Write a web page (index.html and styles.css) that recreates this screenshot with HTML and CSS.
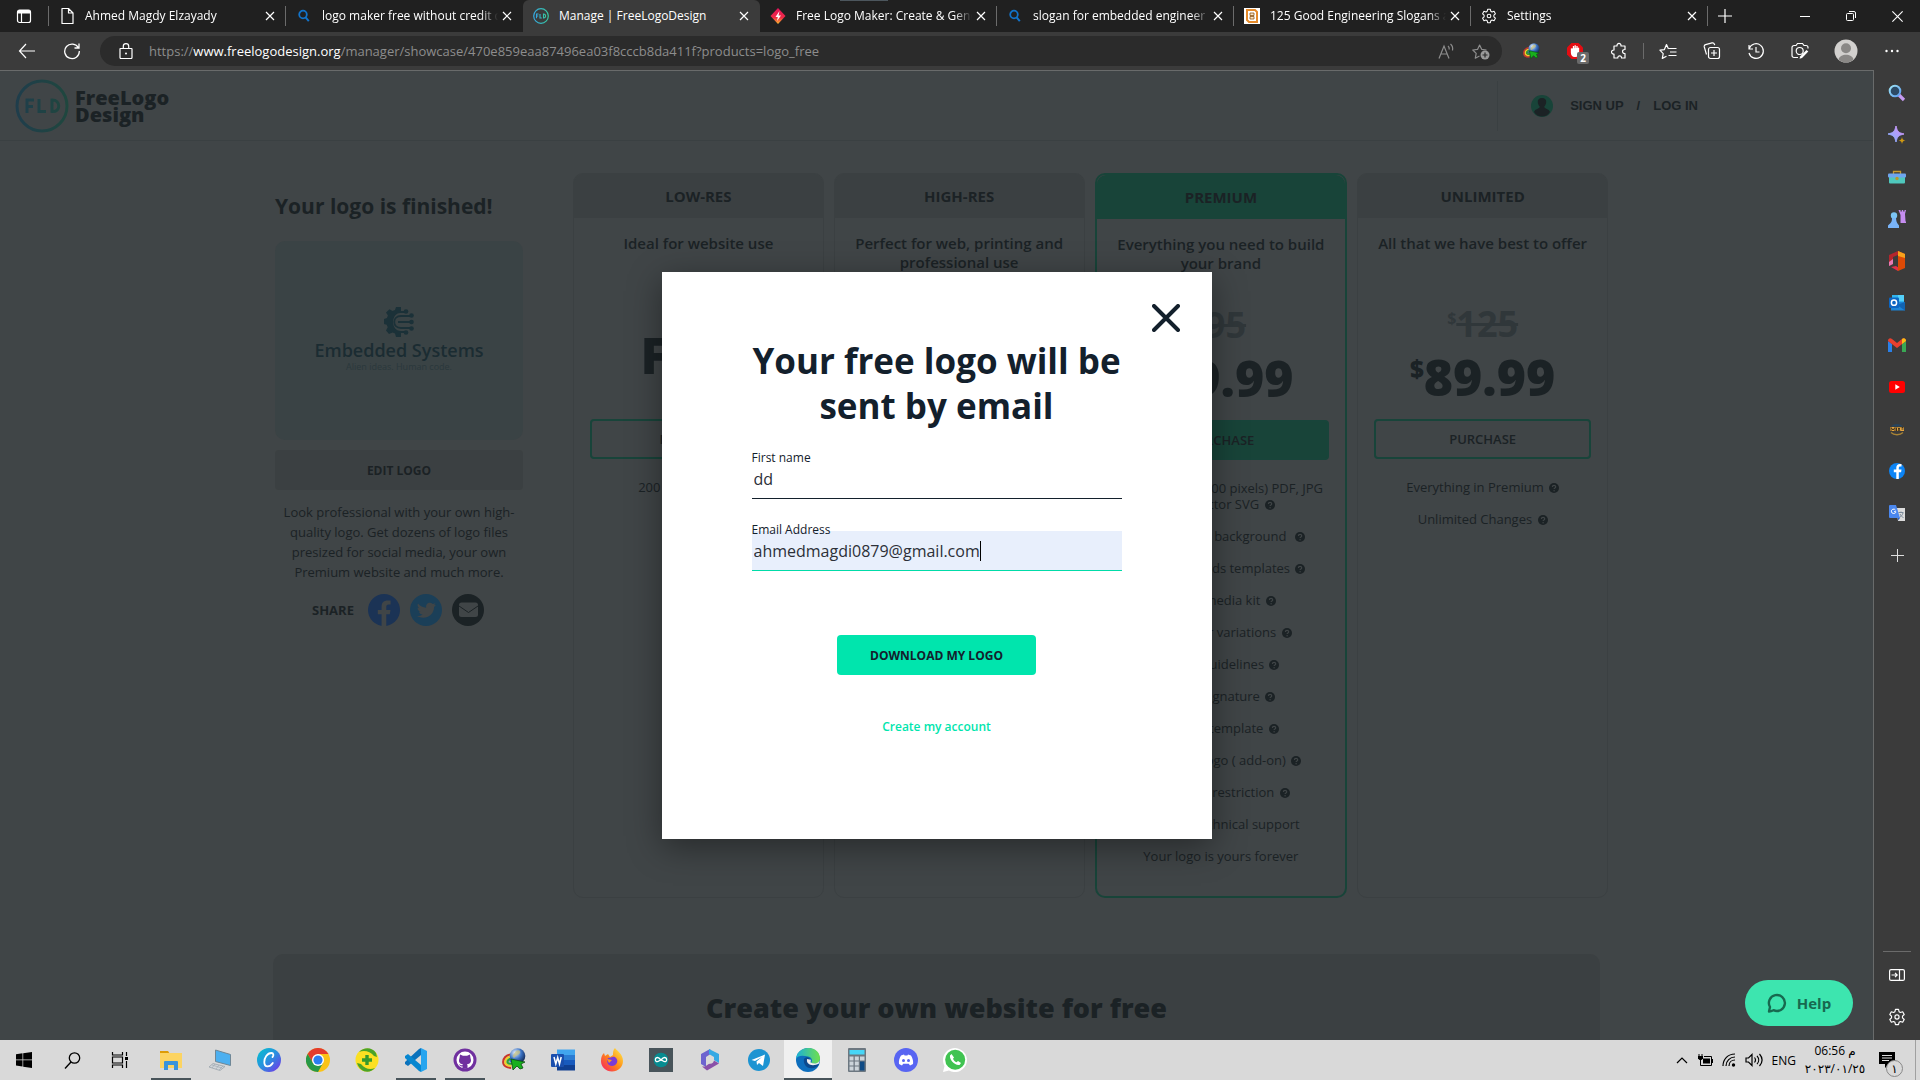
FILE: index.html
```html
<!DOCTYPE html>
<html lang="en">
<head>
<meta charset="utf-8">
<meta name="viewport" content="width=device-width, initial-scale=1">
<title>Manage | FreeLogoDesign</title>
<link rel="stylesheet" href="styles.css">
</head>
<body>
<svg class="defs" aria-hidden="true">
  <defs>
    <linearGradient id="g-fld" x1="0" x2="1" y1="0" y2="0"><stop offset="0" stop-color="#35a8e0"/><stop offset="1" stop-color="#36c9a0"/></linearGradient>
    <linearGradient id="g-flddim" gradientUnits="userSpaceOnUse" x1="0" x2="54" y1="0" y2="0"><stop offset="0" stop-color="#1f3d4c"/><stop offset="1" stop-color="#1f473e"/></linearGradient>
    <linearGradient id="g-spark" x1="0" x2="1" y1="1" y2="0"><stop offset="0" stop-color="#7db4ff"/><stop offset="1" stop-color="#d98cf5"/></linearGradient>
    <linearGradient id="g-lens" x1="0" x2="1" y1="0" y2="1"><stop offset="0" stop-color="#9fe5f5"/><stop offset="1" stop-color="#5b9bf0"/></linearGradient>
    <linearGradient id="g-canva" x1="0" x2="1" y1="0" y2="1"><stop offset="0" stop-color="#00c4cc"/><stop offset=".5" stop-color="#2a8fe0"/><stop offset="1" stop-color="#7d2ae8"/></linearGradient>
    <linearGradient id="g-fox" x1="1" x2="0" y1="0" y2="1"><stop offset="0" stop-color="#fff44f"/><stop offset=".5" stop-color="#ff8a16"/><stop offset="1" stop-color="#f5156c"/></linearGradient>
    <linearGradient id="g-edge" x1="0" x2="1" y1="0" y2="0"><stop offset="0" stop-color="#1bb0d8"/><stop offset="1" stop-color="#6fe04c"/></linearGradient>
    <linearGradient id="g-rose" x1="0" x2="0" y1="0" y2="1"><stop offset="0" stop-color="#e3125c"/><stop offset=".6" stop-color="#ee2b46"/><stop offset="1" stop-color="#ffc02e"/></linearGradient>
    <radialGradient id="g-globe" cx=".35" cy=".3" r=".8"><stop offset="0" stop-color="#e8f2ff"/><stop offset=".5" stop-color="#3a72c4"/><stop offset="1" stop-color="#0e1c40"/></radialGradient>
    <symbol id="i-close" viewBox="0 0 10 10"><path d="M1 1l8 8M9 1L1 9" stroke="currentColor" stroke-width="1.200"/></symbol>
    <symbol id="i-search" viewBox="0 0 16 16"><circle cx="7" cy="6.500" r="3.800" fill="none" stroke="#1273c9" stroke-width="1.800"/><path d="M9.600 9.400l3.200 3.800" stroke="#1273c9" stroke-width="2"/></symbol>
    <symbol id="i-gear" viewBox="0 0 20 20"><g fill="none" stroke="currentColor" stroke-width="1.300" stroke-linejoin="round"><path d="M8.300 1.600h3.400l.6 2.500 1.500.9 2.500-.8 1.700 3-1.900 1.800v2l1.900 1.800-1.700 3-2.500-.8-1.500.9-.6 2.500H8.300l-.6-2.500-1.500-.9-2.500.8-1.700-3L3.900 11V9L2 7.200l1.700-3 2.500.8 1.500-.9z"/><circle cx="10" cy="10" r="2.300"/></g></symbol>
    <symbol id="i-help" viewBox="0 0 10 10"><circle cx="5" cy="5" r="5" fill="#1b2225"/><path d="M3.400 3.900c0-2.100 3.300-2.100 3.300 0 0 1.100-1.600 1.100-1.600 2.200" fill="none" stroke="#404547" stroke-width="1.200"/><circle cx="5.100" cy="7.700" r=".7" fill="#404547"/></symbol>
    <symbol id="i-idm" viewBox="0 0 24 24"><g fill="none" stroke-width="2.200"><path d="M9 6.500C4 7 1.200 10.500 1.200 14c0 4 4 5.800 8 5.800" stroke="#c9362c"/><path d="M9 8.700c-3.600.4-5.700 2.800-5.700 5.300 0 2.600 2.900 3.700 6.200 3.700" stroke="#f0cf2a"/><path d="M9 10.900c-2.200.3-3.500 1.700-3.500 3 0 1.300 2 1.800 4.500 1.800" stroke="#2fa03c"/><path d="M10 13H7.500" stroke="#3b6fd0"/></g><circle cx="15.500" cy="8" r="7.800" fill="url(#g-globe)"/><path d="M14 3c3-2 5 0 4 2s-4 2-5 4-3 0-2-2z" fill="#c9c27a" opacity=".7"/><path d="M9 11l14 3-4 2 2 4-3 1-3-3-4 4z" fill="#18b01c" stroke="#0b4b10" stroke-width=".8"/></symbol>
    <symbol id="i-fb" viewBox="0 0 16 16"><path d="M8.800 16V9.300h-2.500V6.600h2.500V4.800c0-2.500 1.400-3.800 3.600-3.800l1.600.1v2.300h-1.200c-1.200 0-1.500.6-1.500 1.500v1.700H14l-.4 2.700h-2.300V16z"/></symbol>
  </defs>
</svg>

<div class="desktop">
  <header class="tabstrip">
    <button class="tab-actions" aria-label="Tab actions"><svg width="16" height="16" viewBox="0 0 16 16"><rect x="1.500" y="2" width="13" height="12.500" rx="2" fill="none" stroke="#fff" stroke-width="1.200"/><path d="M1.500 5.500V4a2 2 0 012-2h9a2 2 0 012 2v1.500z" fill="#fff"/><path d="M5.500 5v9.500" stroke="#fff" stroke-width="1.200"/></svg></button>
    <div class="tab"><svg width="16" height="18" viewBox="0 0 16 18"><path d="M3 1.500h6.500L14 6v10.500H3zM9.500 1.500V6H14" fill="none" stroke="#fff" stroke-width="1.200" stroke-linejoin="round"/></svg><span class="tab-title">Ahmed Magdy Elzayady</span><button class="tab-close" aria-label="Close tab"><svg width="10" height="10"><use href="#i-close"/></svg></button></div>
    <div class="tab tab-joined"><svg width="16" height="16"><use href="#i-search"/></svg><span class="tab-title">logo maker free without credit card</span><button class="tab-close" aria-label="Close tab"><svg width="10" height="10"><use href="#i-close"/></svg></button></div>
    <div class="tab tab-active"><svg width="16" height="16" viewBox="0 0 16 16"><circle cx="8" cy="8" r="7.300" fill="none" stroke="url(#g-fld)" stroke-width="1.200"/><path d="M3.500 10.200V6h2M3.500 8h1.700M7 6v4h1.800M10.500 6v4c2.800.3 2.800-4.200 0-4z" fill="none" stroke="url(#g-fld)" stroke-width="1.100"/></svg><span class="tab-title">Manage | FreeLogoDesign</span><button class="tab-close" aria-label="Close tab"><svg width="10" height="10"><use href="#i-close"/></svg></button></div>
    <div class="tab"><svg width="16" height="16" viewBox="0 0 16 16"><path d="M8 0l7.500 8L8 16 .5 8z" fill="url(#g-rose)"/><path d="M9.500 3L5.500 9h2.300l-.8 4L11 7.500H8.500z" fill="#fff"/></svg><span class="tab-title">Free Logo Maker: Create &amp; Generate</span><button class="tab-close" aria-label="Close tab"><svg width="10" height="10"><use href="#i-close"/></svg></button></div>
    <div class="tab"><svg width="16" height="16"><use href="#i-search"/></svg><span class="tab-title">slogan for embedded engineer - Search</span><button class="tab-close" aria-label="Close tab"><svg width="10" height="10"><use href="#i-close"/></svg></button></div>
    <div class="tab"><svg width="16" height="16" viewBox="0 0 16 16"><path fill="#fff" d="M0 0h16v16H0z"/><path d="M3 2h8l2 2v10H5l-2-2z" fill="none" stroke="#e58a2a" stroke-width="2"/><path d="M6 5h4v2.500H6zM6 8.500h4V11H6z" fill="#fbe3c4" stroke="#8a5312" stroke-width=".8"/></svg><span class="tab-title">125 Good Engineering Slogans and</span><button class="tab-close" aria-label="Close tab"><svg width="10" height="10"><use href="#i-close"/></svg></button></div>
    <div class="tab"><svg width="18" height="18"><use href="#i-gear"/></svg><span class="tab-title">Settings</span><button class="tab-close" aria-label="Close tab"><svg width="10" height="10"><use href="#i-close"/></svg></button></div>
    <button class="new-tab" aria-label="New tab"><svg width="14" height="14" viewBox="0 0 14 14"><path d="M7 0v14M0 7h14" stroke="#fff" stroke-width="1.200"/></svg></button>
    <div class="window-controls">
      <button aria-label="Minimize"><svg width="10" height="10" viewBox="0 0 10 10"><path d="M0 5.500h10" stroke="#fff"/></svg></button>
      <button aria-label="Restore"><svg width="10" height="10" viewBox="0 0 10 10"><path d="M.5 3.500a1 1 0 011-1h5a1 1 0 011 1v5a1 1 0 01-1 1h-5a1 1 0 01-1-1zM3 .5h5a1.500 1.500 0 011.500 1.500v5" fill="none" stroke="#fff"/></svg></button>
      <button aria-label="Close"><svg width="11" height="11" viewBox="0 0 10 10"><path d="M.3.3l9.400 9.400M9.700.3L.3 9.700" stroke="#fff"/></svg></button>
    </div>
  </header>

  <nav class="toolbar" aria-label="Browser toolbar">
    <button aria-label="Back"><svg width="18" height="16" viewBox="0 0 18 16"><path d="M8 1L1.500 8 8 15M1.500 8H17" fill="none" stroke="#fff" stroke-width="1.200"/></svg></button>
    <button aria-label="Refresh"><svg width="18" height="18" viewBox="0 0 18 18"><path d="M15.500 6A7.300 7.300 0 1016.300 9M16 1.500V6h-4.500" fill="none" stroke="#fff" stroke-width="1.300"/></svg></button>
    <div class="address">
      <svg width="14" height="16" viewBox="0 0 14 16"><path d="M1.500 5.500h11a.5.500 0 01.5.500v8.500a1 1 0 01-1 1H2a1 1 0 01-1-1V6a.5.500 0 01.5-.5zM4.300 5.500V3.300a2.700 2.700 0 015.400 0v2.200" fill="none" stroke="#fff" stroke-width="1.200"/><circle cx="7" cy="10.500" r="1" fill="#fff"/></svg>
      <div class="url" role="textbox" aria-label="Address">https://<b>www.freelogodesign.org</b>/manager/showcase/470e859eaa87496ea03f8cccb8da411f?products=logo_free</div>
      <button aria-label="Read aloud"><svg width="17" height="17" viewBox="0 0 17 17"><path d="M1 15.500L6 3l5 12.500M2.800 11h6.400M10 3c1 .8 1.400 2 1.200 3.500M12.500 1c1.900 1.600 2.500 4 2 6.500" fill="none" stroke="#8d8d8d" stroke-width="1.200"/></svg></button>
      <button aria-label="Add to favorites"><svg width="18" height="18" viewBox="0 0 18 18"><path d="M7.500 14L3.300 16.200l.9-4.800L.8 8l4.700-.6L7.600 3l2.200 4.400 4.700.6" fill="none" stroke="#8d8d8d" stroke-width="1.200" stroke-linejoin="round"/><circle cx="13" cy="13" r="4.500" fill="#9a9a9a"/><path d="M13 10.500v5M10.500 13h5" stroke="#2b2b2b" stroke-width="1.200"/></svg></button>
    </div>
    <div class="tools">
      <button aria-label="Download manager"><svg width="17" height="17"><use href="#i-idm"/></svg></button>
      <button class="blocker" aria-label="Ad blocker"><svg width="18" height="18" viewBox="0 0 18 18"><path d="M5.500 1h7L17 5.500v7L12.500 17h-7L1 12.500v-7z" fill="#e40d12"/><path d="M5.500 6.500v4c0 5 6.500 5 7 1V5.800M7.500 10V4M9.200 9V3.300M11 9V4" fill="#fff" stroke="#fff" stroke-width="1.300"/></svg><span class="badge">2</span></button>
      <button aria-label="Extensions"><svg width="18" height="18" viewBox="0 0 18 18"><path d="M4 4h3c-.5-3.500 4.500-3.500 4 0h4v3.500c-3.300-.3-3.300 4.300 0 4V16h-3.500c.3-2.800-4-2.800-3.700 0H4v-4c-3.300.4-3.300-4.200 0-4z" fill="none" stroke="#fff" stroke-width="1.200" stroke-linejoin="round"/></svg></button>
      <span class="rule"></span>
      <button aria-label="Favorites"><svg width="18" height="18" viewBox="0 0 18 18"><path d="M7.500 14.200L3.300 16.400l.9-4.800L.9 8.200l4.500-.6L7.500 2.500l2 4.500M10 6.500h7.500M11 10h6.500M9.500 13.500h8" fill="none" stroke="#fff" stroke-width="1.200" stroke-linejoin="round"/></svg></button>
      <button aria-label="Collections"><svg width="18" height="18" viewBox="0 0 18 18"><rect x="5.500" y="5.500" width="11" height="11" rx="2" fill="none" stroke="#fff" stroke-width="1.200"/><path d="M3.500 12.500L1.300 5a2 2 0 011.300-2.400L9 .9a2 2 0 012.400 1.300l.3 1M11 8v6M8 11h6" fill="none" stroke="#fff" stroke-width="1.200"/></svg></button>
      <button aria-label="History"><svg width="18" height="18" viewBox="0 0 18 18"><path d="M2 3v4h4M2.200 6.500A7.300 7.300 0 112 11M9 5v5h3.500" fill="none" stroke="#fff" stroke-width="1.200"/></svg></button>
      <button aria-label="Web capture"><svg width="18" height="18" viewBox="0 0 18 18"><path d="M7 15.500H3a2 2 0 01-2-2V5.500a2 2 0 012-2h2l1.500-2h5l1.500 2h2a2 2 0 012 2v1" fill="none" stroke="#fff" stroke-width="1.200"/><circle cx="8.700" cy="9" r="3.500" fill="none" stroke="#fff" stroke-width="1.200"/><path d="M17.300 9.500L11 16l-2.500.8.800-2.600L15.500 8z" fill="#fff"/></svg></button>
      <button class="profile" aria-label="Profile"><svg width="24" height="24" viewBox="0 0 24 24"><circle cx="12" cy="12" r="11.500" fill="#d2d0ce"/><circle cx="12" cy="9.300" r="5" fill="#8a8886"/><path d="M4.500 20.500c1-6.500 14-6.500 15 0-4 3.800-11 3.800-15 0z" fill="#8a8886"/></svg></button>
      <button aria-label="Settings and more"><svg width="14" height="4" viewBox="0 0 14 4"><g fill="#fff"><circle cx="1.500" cy="2" r="1.200"/><circle cx="7" cy="2" r="1.200"/><circle cx="12.500" cy="2" r="1.200"/></g></svg></button>
    </div>
  </nav>

  <div class="browser">
    <main class="page">
      <header class="site-header">
        <a class="brand" href="#"><svg width="54" height="54" viewBox="0 0 54 54"><circle cx="27" cy="27" r="25" fill="none" stroke="url(#g-flddim)" stroke-width="3"/><path d="M12 34V21h7M12 27.500h6M24 20v12.500h7M37 21v11.500c9 1 9-12 0-11.500z" fill="none" stroke="url(#g-flddim)" stroke-width="3"/></svg><span>FreeLogo<br>Design</span></a>
        <div class="account"><svg width="22" height="22" viewBox="0 0 22 22"><circle cx="11" cy="11" r="11" fill="#184439"/><path d="M11 3c6 0 4.500 6.500 2.200 8.700.3 2.300 4.800 1.800 5.800 5.300-3.500 6-12.500 6-16 0 1-3.500 5.500-3 5.800-5.300C6.500 9.500 5 3 11 3z" fill="#1b2225"/></svg><a href="#">SIGN UP</a><span>/</span><a href="#">LOG IN</a></div>
      </header>

      <div class="content">
        <div class="showcase">
          <section class="summary">
            <h2>Your logo is finished!</h2>
            <div class="preview">
              <svg width="30" height="30" viewBox="0 0 30 30"><path d="M12 0h5v6c-10-1-11 18 0 18v6h-5l-1-3.500-2.500-1L5 27l-3-3.500 1.700-3.200-1-2.500L0 17v-5l2.900-1 1-2.400L2 5.500 5.500 2.300l3 1.700L11 3z" fill="#1b3138"/><path d="M28 9h-11c-9 0-9 12 0 12h11M27 15H14M15 5h8M15 25h8" fill="none" stroke="#1b3138" stroke-width="1.800"/><g fill="#1b3138"><circle cx="22" cy="4.500" r="2.300"/><circle cx="27.500" cy="8.500" r="2.300"/><circle cx="27.500" cy="15" r="2.300"/><circle cx="27.500" cy="21.500" r="2.300"/><circle cx="22" cy="25.500" r="2.300"/></g></svg>
              <strong>Embedded Systems</strong>
              <small>Alien ideas. Human code.</small>
            </div>
            <button class="edit">EDIT LOGO</button>
            <p>Look professional with your own high-quality logo. Get dozens of logo files presized for social media, your own Premium website and much more.</p>
            <div class="share"><b>SHARE</b>
              <a href="#" aria-label="Facebook"><svg width="32" height="32" viewBox="0 0 32 32"><circle cx="16" cy="16" r="16" fill="#1b3355"/><path d="M13.600 32V20.300H9.800V16h3.800v-3.600c0-4 2.400-6 6-6 1.500 0 3 .2 3 .2v3.800h-2c-1.800 0-2.300 1-2.300 2.200V16h4.200l-.7 4.300h-3.500V32z" fill="#404547"/></svg></a>
              <a href="#" aria-label="Twitter"><svg width="32" height="32" viewBox="0 0 32 32"><circle cx="16" cy="16" r="16" fill="#1b3f58"/><path d="M8 9.500c2 2.500 5 4 8.200 4.200-.8-4.700 4-6.200 6.500-3.600 1 0 2-.5 2.800-1-.3 1-.9 1.600-1.700 2.200l2.300-.6-2 2.200c0 8.500-9 13.500-17.100 9.100 2.200.1 4-.5 5.500-1.600-1.800 0-3-1-3.600-2.600h1.700c-1.900-.5-3-2-3-4l1.700.4C7.700 13 7.100 11.300 8 9.500z" fill="#404547"/></svg></a>
              <a href="#" aria-label="Email"><svg width="32" height="32" viewBox="0 0 32 32"><circle cx="16" cy="16" r="16" fill="#1b2225"/><rect x="7" y="8.500" width="19" height="14.500" rx="2.500" fill="#404547"/><path d="M7 12l9.500 6.500L26 12" fill="none" stroke="#1b2225"/></svg></a>
            </div>
          </section>

          <section class="plans">
            <article class="plan">
              <h3>LOW-RES</h3>
              <p class="pitch">Ideal for website use</p>
              <div class="prices"><strong>FREE</strong></div>
              <button class="buy">DOWNLOAD</button>
              <ul><li>200 x 200 pixels JPG</li></ul>
            </article>
            <article class="plan">
              <h3>HIGH-RES</h3>
              <p class="pitch">Perfect for web, printing and professional use</p>
              <div class="prices"><s><sup>$</sup>59</s><strong><sup>$</sup>39.99</strong></div>
              <button class="buy">PURCHASE</button>
              <ul><li>PNG, JPG and PDF</li></ul>
            </article>
            <article class="plan plan-premium">
              <h3>PREMIUM</h3>
              <p class="pitch">Everything you need to build your brand</p>
              <div class="prices"><s><sup>$</sup>95</s><strong><sup>$</sup>59.99</strong></div>
              <button class="buy">PURCHASE</button>
              <ul>
                <li>PNG (5000 x 5000 pixels) PDF, JPG and vector SVG <svg width="10" height="10"><use href="#i-help"/></svg></li>
                <li>Transparent background &nbsp;<svg width="10" height="10"><use href="#i-help"/></svg></li>
                <li>Business cards templates <svg width="10" height="10"><use href="#i-help"/></svg></li>
                <li>Social media kit <svg width="10" height="10"><use href="#i-help"/></svg></li>
                <li>Logo color variations <svg width="10" height="10"><use href="#i-help"/></svg></li>
                <li>Brand guidelines <svg width="10" height="10"><use href="#i-help"/></svg></li>
                <li>Email signature <svg width="10" height="10"><use href="#i-help"/></svg></li>
                <li>Invoice template <svg width="10" height="10"><use href="#i-help"/></svg></li>
                <li>Animated logo ( add-on) <svg width="10" height="10"><use href="#i-help"/></svg></li>
                <li>No usage restriction <svg width="10" height="10"><use href="#i-help"/></svg></li>
                <li>Lifetime technical support</li>
                <li>Your logo is yours forever</li>
              </ul>
            </article>
            <article class="plan">
              <h3>UNLIMITED</h3>
              <p class="pitch">All that we have best to offer</p>
              <div class="prices"><s><sup>$</sup>125</s><strong><sup>$</sup>89.99</strong></div>
              <button class="buy">PURCHASE</button>
              <ul>
                <li>Everything in Premium <svg width="10" height="10"><use href="#i-help"/></svg></li>
                <li>Unlimited Changes <svg width="10" height="10"><use href="#i-help"/></svg></li>
              </ul>
            </article>
          </section>
        </div>
        <section class="website"><h2>Create your own website for free</h2></section>
      </div>

      <div class="overlay">
        <form class="modal" role="dialog" aria-labelledby="modal-title">
          <button type="button" class="modal-close" aria-label="Close"><svg width="28" height="28" viewBox="0 0 28 28"><path d="M2 2l24 24M26 2L2 26" stroke="#13202c" stroke-width="4" stroke-linecap="round"/></svg></button>
          <h1 id="modal-title">Your free logo will be sent by email</h1>
          <div class="field"><label for="name">First name</label><input id="name" type="text" value="dd"></div>
          <div class="field field-focus"><label for="email">Email Address</label><input id="email" type="email" value="ahmedmagdi0879@gmail.com"><span class="caret"></span></div>
          <button type="button" class="download">DOWNLOAD MY LOGO</button>
          <a class="create" href="#">Create my account</a>
        </form>
      </div>

      <button class="help"><svg width="20" height="20" viewBox="0 0 20 20"><path d="M2 18.500l1-4.500A8 8 0 116.500 17.200C5 18 3.500 18.500 2 18.500z" fill="none" stroke="#17694f" stroke-width="2.400" stroke-linejoin="round"/></svg>Help</button>
    </main>

    <aside class="sidebar" aria-label="Sidebar">
      <button aria-label="Search"><svg width="18" height="18" viewBox="0 0 18 18"><path d="M11 11l5 5" stroke="#c79bf2" stroke-width="3.200"/><circle cx="7" cy="7" r="5.300" fill="#2c4a66" stroke="url(#g-lens)" stroke-width="2"/></svg></button>
      <button aria-label="Discover"><svg width="18" height="18" viewBox="0 0 18 18"><path d="M8 0c1.300 5.500 2.500 6.700 8 8-5.500 1.300-6.700 2.500-8 8-1.300-5.500-2.500-6.700-8-8 5.500-1.300 6.700-2.500 8-8z" fill="url(#g-spark)" stroke="url(#g-spark)"/><path d="M14 11c.4 2.500 1 3 3.500 3.500-2.500.4-3 1-3.500 3.500-.4-2.500-1-3-3.500-3.500 2.500-.4 3-1 3.500-3.500z" fill="#d19a12"/></svg></button>
      <button aria-label="Shopping"><svg width="18" height="18" viewBox="0 0 18 18"><path d="M5.500 6V3.500h7V6" fill="none" stroke="#c79a2e" stroke-width="1.300"/><rect x="1" y="8" width="16" height="7.500" rx="1" fill="#4fc8bd"/><rect y="5.500" width="18" height="4" rx="1" fill="#6fa5ee"/><circle cx="9" cy="10.500" r="1.700" fill="#b8972e"/></svg></button>
      <button aria-label="Games"><svg width="18" height="18" viewBox="0 0 18 18"><path d="M10.500 0h2v1.500h1.300V0h1.400v1.500h1.300V0h1.500l-1 4 .5 7 1 2h-6V5z" fill="#c58df0"/><circle cx="6" cy="5.500" r="3.200" fill="#7cc4f5"/><path d="M4 8h4c.3 4 1 5 3 7.500V18H0v-2.500C3 13 4 12 4 8z" fill="#7ab4f8"/></svg></button>
      <button aria-label="Office"><svg width="18" height="20" viewBox="0 0 18 20"><path d="M10 0L1 4v11l4-2V6l5-2z" fill="#b3262c"/><path d="M1 15l4-2V8L1 11z" fill="#e87ab4"/><path d="M3 16l7 4 1-3-3-2z" fill="#e5304a"/><path d="M10 0l7 3v14l-7 3z" fill="#dd4a06"/><path d="M10 0l7 3v4l-7-2z" fill="#f7a21c"/></svg></button>
      <button aria-label="Outlook"><svg width="18" height="18" viewBox="0 0 18 18"><path d="M4 1h12v10H4z" fill="#31b4ee"/><path d="M10 1h6v6h-6z" fill="#54d0fa"/><path d="M3 8h14v8.500H3z" fill="#1c84d6"/><path d="M17 8v8.500L9 11z" fill="#1263b0"/><rect x="1" y="3.500" width="10" height="10.500" rx="1" fill="#0b65c2"/><circle cx="6" cy="8.700" r="2.600" fill="none" stroke="#fff" stroke-width="1.500"/></svg></button>
      <button aria-label="Gmail"><svg width="18" height="14" viewBox="0 0 18 14"><path d="M0 3l4 3v8H0z" fill="#2a80e8"/><path d="M14 6l4-3v11h-4z" fill="#39a854"/><path d="M0 3C0 0 2.500-.5 4 1l5 4 5-4c1.500-1.500 4-1 4 2L9 10z" fill="#e8402f"/><path d="M14 1c1.500-1.500 4-1 4 2l-4 3z" fill="#f9bc15"/></svg></button>
      <button aria-label="YouTube"><svg width="16" height="12" viewBox="0 0 16 12"><rect width="16" height="12" rx="2.500" fill="#f00"/><path d="M6.300 3.300v5.400L10.800 6z" fill="#fff"/></svg></button>
      <button aria-label="News"><svg width="16" height="14" viewBox="0 0 16 14"><path d="M2 4.500C4 1 12 1 14 4.500z" fill="#27455f"/><path d="M1 5h14v4H1z" fill="#e4a541"/><path d="M2 9V5.500L4 8l2-2.500V9M7.500 5.500V9M9 5.500L11 9M11 5.500L9 9M12.500 5.500h2M12.500 7h2" fill="none" stroke="#3a2f1c"/><path d="M2 10.500c3 3 9 3 12 0" fill="none" stroke="#a88335" stroke-width="1.300"/></svg></button>
      <button aria-label="Facebook"><svg width="16" height="16" viewBox="0 0 16 16"><circle cx="8" cy="8" r="8" fill="#0c84f5"/><g transform="translate(-1.500 0)"><use href="#i-fb" width="16" height="16" fill="#fff"/></g></svg></button>
      <button aria-label="Translate"><svg width="16" height="16" viewBox="0 0 16 16"><path d="M7 3h9v13H9z" fill="#dcdcdc"/><path d="M9.500 7.500h5M12 6.500v1M14 8c-.5 2-2 3.500-3.500 4.500M11 9c1 2 2 3 3.500 3.500" stroke="#7b8a9a" fill="none"/><path d="M0 1a1 1 0 011-1h6l4 13H1a1 1 0 01-1-1z" fill="#4b87ee"/><path d="M9 13h2l-2 2.500z" fill="#2a5fc4"/><path d="M6.500 5.200A2.200 2.200 0 104.800 8.500c1.500 0 2-.8 2-1.800H5" fill="none" stroke="#fff"/></svg></button>
      <button aria-label="Add"><svg width="13" height="13" viewBox="0 0 13 13"><path d="M6.500 0v13M0 6.500h13" stroke="#ddd"/></svg></button>
      <div class="sidebar-foot">
        <button aria-label="Hide sidebar"><svg width="16" height="12" viewBox="0 0 16 12"><rect x=".6" y=".6" width="14.800" height="10.800" rx="1.500" fill="none" stroke="#fff" stroke-width="1.200"/><path d="M10.500 0v12M2.500 6h5.500M6 3.800L8.200 6 6 8.200" fill="none" stroke="#fff" stroke-width="1.200"/></svg></button>
        <button aria-label="Settings"><svg width="18" height="18"><use href="#i-gear"/></svg></button>
      </div>
    </aside>
  </div>

  <footer class="taskbar">
    <div class="system">
      <button aria-label="Start"><svg width="16" height="16" viewBox="0 0 16 16"><path d="M0 2.200l6.500-.9v6.200H0zM7.200 1.200L16 0v7.500H7.200zM0 8.300h6.500v6.200L0 13.600zM7.200 8.300H16V16l-8.800-1.200z" fill="#000"/></svg></button>
      <button aria-label="Search"><svg width="17" height="17" viewBox="0 0 17 17"><circle cx="10.500" cy="6" r="5.200" fill="none" stroke="#000" stroke-width="1.300"/><path d="M7 10L1 16.500" stroke="#000" stroke-width="1.400"/></svg></button>
      <button aria-label="Task view"><svg width="18" height="16" viewBox="0 0 18 16"><path d="M1.500 0v3h10V0M1.500 16v-3h10v3M1.500 5h10v6h-10zM15.500 0v4M15.500 9v7" fill="none" stroke="#000" stroke-width="1.200"/><path d="M14 5h3v3h-3z"/></svg></button>
    </div>
    <div class="apps">
      <button class="open" aria-label="File Explorer"><svg width="24" height="24" viewBox="0 0 24 24"><path d="M1 3h8l2 3H1z" fill="#dd9c06"/><path d="M1 5h22v15H1z" fill="#fcd462"/><path d="M5 22v-8a1 1 0 011-1h12a1 1 0 011 1v8h-4v-5H9v5z" fill="#3a94db"/></svg></button>
      <button aria-label="This PC"><svg width="24" height="24" viewBox="0 0 24 24"><path d="M7.500 2l15 4.500v11l-15-4z" fill="#4db0f0" stroke="#6f8796"/><path d="M5 15.500l12 3-5 4-11-3.500z" fill="#d2d6da" stroke="#9aa4ac" stroke-width=".8"/><path d="M4 17l10 3M7 16l-3 4M11 17l-3 4M15 18l-4 4" stroke="#9aa4ac" stroke-width=".6"/></svg></button>
      <button aria-label="Canva"><svg width="24" height="24" viewBox="0 0 24 24"><circle cx="12" cy="12" r="12" fill="url(#g-canva)"/><path d="M15.500 9c1.500-1.500 1-4-1-4C10 5 7.300 10 7.300 14c0 6 5.500 5.500 8.500 1" fill="none" stroke="#fff" stroke-width="1.800" stroke-linecap="round"/></svg></button>
      <button aria-label="Chrome"><svg width="24" height="24" viewBox="0 0 24 24"><circle cx="12" cy="12" r="12" fill="#fbc316"/><path d="M1.600 6a12 12 0 0120.800 0H12l-5.200 9z" fill="#e33b2e"/><path d="M1.600 6A12 12 0 0012 24l5-9-10 0z" fill="#279847"/><circle cx="12" cy="12" r="6" fill="#fff"/><circle cx="12" cy="12" r="4.600" fill="#2a7df0"/></svg></button>
      <button aria-label="360 Security"><svg width="24" height="24" viewBox="0 0 24 24"><circle cx="12" cy="12" r="11.500" fill="#fbe022"/><path d="M4 4c5-5 13-5 17 1l1 4-3-1C15 3 9 2 4 4zM2 15l4 1c4 5 9 6 14 4-5 6-15 5-18-5z" fill="#4aa328"/><path d="M12 7v10M7 12h10" stroke="#35992c" stroke-width="3.400"/></svg></button>
      <button class="open" aria-label="Visual Studio Code"><svg width="24" height="24" viewBox="0 0 24 24"><path d="M17 0l6 3v18l-6 3z" fill="#27a5ef"/><path d="M17 0v7L4 18l-3-2V14L15 1z" fill="#0a72bc"/><path d="M17 24v-7L4 6 1 8v2l14 13z" fill="#0787d0"/></svg></button>
      <button class="open" aria-label="GitHub Desktop"><svg width="24" height="24" viewBox="0 0 24 24"><circle cx="12" cy="12" r="11.500" fill="#70309f"/><circle cx="12" cy="12" r="8.500" fill="#fff"/><path d="M7 6.500l3 1.300h4l3-1.300.5 3.500c1.500 4-.5 5.800-3.500 6.300l.5 1v3.500h-5v-2.500c-2 .4-2.500-.8-3.500-1.800 1.500 0 1.700 1 3.500.7l.3-1C7 16 5 14 6.500 10z" fill="#70309f"/></svg></button>
      <button aria-label="Internet Download Manager"><svg width="24" height="24"><use href="#i-idm"/></svg></button>
      <button aria-label="Word"><svg width="24" height="24" viewBox="0 0 24 24"><path d="M6 1.500h18v5.500H6z" fill="#41a5ee"/><path d="M6 7h18v5H6z" fill="#2b7cd3"/><path d="M6 12h18v5H6z" fill="#185abd"/><path d="M6 17h18v5.500H6z" fill="#103f91"/><rect y="6" width="13" height="13" rx="1" fill="#1a4fae"/><path d="M3 9l1.800 7 1.900-6.500L8.500 16l1.700-7" fill="none" stroke="#fff" stroke-width="1.500"/></svg></button>
      <button aria-label="Firefox"><svg width="24" height="24" viewBox="0 0 24 24"><path d="M15 0c2 3 8 6 8 13 0 6-5 10.500-11 10.500S1 19 1 13c0-4 1-6 3-8l1 3 3-2 2 3 3-2c0-3 0-5 2-7z" fill="url(#g-fox)"/><path d="M8 10c3 0 4-2 7-1 5 4 1 9-3 9s-6-4-4-8z" fill="#7a3bd6"/><path d="M7 11l5 1-3 3z" fill="#ff9a1c"/></svg></button>
      <button aria-label="Arduino"><svg width="24" height="24" viewBox="0 0 24 24"><path d="M0 0h24v24H0z" fill="#48545a"/><circle cx="12" cy="12" r="7.300" fill="#078c91"/><path d="M12 12c-4-5-7-1-5 1.200 2 1.500 3.500-1.200 5-1.200 4-5 7-1 5 1.200-2 1.500-3.500-1.200-5-1.200z" fill="none" stroke="#fff" stroke-width="1.300"/></svg></button>
      <button aria-label="Microsoft 365"><svg width="24" height="24" viewBox="0 0 24 24"><path d="M12 1L3 6v10l5 3V9l6-4z" fill="#6d64cf"/><path d="M11 1l10 5v9l-5-3V9l-5-3z" fill="#35a9e4"/><path d="M9 22.500l12-7-5-3-9 6H4z" fill="#8a51a8"/><circle cx="12" cy="12" r="3.800" fill="#d9d9d9"/></svg></button>
      <button aria-label="Telegram"><svg width="24" height="24" viewBox="0 0 24 24"><circle cx="12" cy="12" r="11" fill="#1c94d2"/><path d="M4.500 12L18 6.500 16 18l-4-3-2 2-.5-3.500L15 9l-7 4z" fill="#fff"/></svg></button>
      <button class="open active" aria-label="Edge"><svg width="24" height="24" viewBox="0 0 24 24"><circle cx="12" cy="12" r="12" fill="#0d6ebd"/><path d="M0 11C1-3 23-4 24 10c0 6-6 7-9 5 2-2 1-6-3-6.500C7 7.500 2 7 0 11z" fill="url(#g-edge)"/><path d="M8 11c2-3 6-2 6 1-1 3 4 5.500 9 4-3 6-12 5-14 1-1-2-1.500-4-1-6z" fill="#0b4a8e"/><path d="M11 11c-1 6 6 8 12 4.500L24 11c-1 5-6 5-9 3.800-1-.8 0-1-.2-3z" fill="#efefef"/></svg></button>
      <button aria-label="Calculator"><svg width="24" height="24" viewBox="0 0 24 24"><rect x="3" width="18" height="24" rx="1" fill="#6c7780"/><path d="M4.500 2h15v4.500h-15z" fill="#46d6f7"/><path d="M4.500 8.500h4v4h-4zM9.800 8.500h4v4h-4zM15 8.500h4.500v4H15zM4.500 13.500h4v4h-4zM9.800 13.500h4v4h-4zM4.500 18.500h4v4h-4zM9.800 18.500h4v4h-4z" fill="#ccd4da"/><path d="M15 13.500h4.500v9H15z" fill="#0e4a85"/></svg></button>
      <button aria-label="Discord"><svg width="24" height="24" viewBox="0 0 24 24"><circle cx="12" cy="12" r="12" fill="#5865f2"/><path d="M7 7.500l3-1 .6 1h2.800l.6-1 3 1c1.800 3 2.500 6 2 8.500l-3 1.500-1.200-1.700H9.200L8 17.500 5 16c-.4-3 .4-6 2-8.500z" fill="#fff"/><circle cx="9.500" cy="12.500" r="1.500" fill="#5865f2"/><circle cx="14.500" cy="12.500" r="1.500" fill="#5865f2"/></svg></button>
      <button aria-label="WhatsApp"><svg width="24" height="24" viewBox="0 0 24 24"><path d="M0 24l1.500-6A12 12 0 116 22.500z" fill="#fff"/><circle cx="12.200" cy="11.800" r="10" fill="#40c351"/><path d="M8.500 6L7 7.500c-.8 4 5 10.500 9.500 9.500l1.500-2-3-2-1.500 1.300c-1.500-.6-2.700-1.800-3.500-3.500L11 9.500z" fill="#fff"/></svg></button>
    </div>
    <div class="tray">
      <svg width="12" height="8" viewBox="0 0 12 8"><path d="M1 7l5-5 5 5" fill="none" stroke="#000" stroke-width="1.200"/></svg>
      <svg width="16" height="12" viewBox="0 0 16 12"><path d="M6 4.500h7v5H6z" fill="#000"/><path d="M2 0v2.500M5 0v2.500M7 2.500h7.500v9h-11V6M15.500 5v4" fill="none" stroke="#000"/><path d="M1 2h5v2.500L4.500 6h-2L1 4.500z" fill="#000"/></svg>
      <svg width="14" height="14" viewBox="0 0 14 14"><path d="M1 13C1 6 6 1 13 1M4 13c0-5 4-9 9-9M7 13c0-3.500 2.500-6 6-6" fill="none" stroke="#000" stroke-width="1.200"/><circle cx="11.500" cy="12" r="1.700" fill="#000"/></svg>
      <svg width="18" height="14" viewBox="0 0 18 14"><path d="M1 5h2.500L7 1.500v11L3.500 9H1zM9.500 4.500c1.200 1.500 1.200 3.500 0 5M12 2.800c2.200 2.500 2.200 6 0 8.400M14.500 1c3.200 3.700 3.200 8.300 0 12" fill="none" stroke="#000" stroke-width="1.200"/></svg>
      <span>ENG</span>
      <div class="clock"><span>06:56 م</span><span>٢٠٢٣/٠١/٢٥</span></div>
      <button class="notice" aria-label="Notifications"><svg width="17" height="17" viewBox="0 0 17 17"><path d="M0 0h16v12h-6l-4 4v-4H0z" fill="#000"/><path d="M3 3.500h10M3 6h10M3 8.500h7" stroke="#ddd"/></svg><span>١</span></button>
    </div>
  </footer>
</div>
</body>
</html>
```
FILE: styles.css
```css
* { box-sizing: border-box; }
body { margin: 0; background: #404547; font-family: "Open Sans", sans-serif; }
h1, h2, h3, p, ul { margin: 0; padding: 0; }
ul { list-style: none; }
a { color: inherit; text-decoration: none; }
button { display: flex; align-items: center; justify-content: center; margin: 0; padding: 0; border: 0; background: none; color: inherit; font: inherit; }
svg { flex: none; }
.defs { position: absolute; width: 0; height: 0; }

.desktop { display: flex; flex-direction: column; height: 100vh; min-height: 600px; overflow: hidden; }

/* Tabs */
.tabstrip { position: relative; flex: none; display: flex; height: 32px; background: #202020; color: #fff; font-size: 12px; }
.tabstrip::before { content: ""; position: absolute; left: 840px; top: 0; width: 48px; height: 1px; background: #4c565d; }
.tab-actions { flex: none; width: 49px; border-right: 1px solid #6b6b6b; margin: 6px 0; }
.tab { flex: 0 1 237px; min-width: 0; display: flex; align-items: center; gap: 10px; padding: 0 0 6px 10px; }
.tab > svg { width: 16px; margin-top: 6px; }
.tab::after { content: ""; align-self: flex-end; width: 1px; height: 20px; background: #6b6b6b; }
.tab-joined::after, .tab-active::after { background: none; }
.tab-active { background: #3b3b3b; border-radius: 6px 6px 0 0; }
.tab-title { flex: 1; margin-right: -4px; padding-top: 6px; line-height: 20px; overflow: hidden; white-space: nowrap; mask-image: linear-gradient(to right, #000 90%, transparent); }
.tab-active .tab-title { mask-image: none; }
.tab-close { width: 14px; height: 14px; margin: 6px -2px 0 -4px; }
.new-tab { width: 34px; margin-right: auto; }
.window-controls { display: flex; }
.window-controls button { width: 46px; }

/* Toolbar */
.toolbar { flex: none; display: flex; align-items: center; height: 38px; padding: 0 6px 0 4px; background: #3b3b3b; color: #fff; }
.toolbar > button { width: 45px; height: 30px; }
.address { flex: 1; display: flex; align-items: center; gap: 17px; height: 30px; margin: 0 7px 0 6px; padding: 0 12px 0 19px; border-radius: 15px; background: #2b2b2b; }
.url { flex: 1; overflow: hidden; white-space: nowrap; font-size: 13px; color: #8d8d8d; margin-left: -1px; }
.url b { font-weight: 400; color: #fff; }
.tools { display: flex; align-items: center; }
.tools button { width: 44px; height: 30px; }
.tools .profile { width: 48px; }
.rule { width: 1px; height: 16px; margin: 0 2px; background: #6b6b6b; }
.blocker { position: relative; }
.badge { position: absolute; left: 24px; top: 16px; width: 12px; height: 12px; border-radius: 2px; background: #6a6a6a; font-size: 10px; font-weight: 700; line-height: 12px; }

/* Browser body */
.browser { flex: 1; min-height: 0; display: flex; background: #3b3b3b; }
.page { position: relative; flex: 1; min-width: 0; overflow: hidden; border-top: 1px solid #696b6b; border-right: 1px solid #696b6b; background: #404547; color: #1b2225; }
.site-header { display: flex; align-items: center; justify-content: space-between; height: 70px; padding: 0 175px 0 15px; border-bottom: 1px solid #3a4042; }
.brand { display: flex; align-items: center; gap: 6px; font-size: 20px; font-weight: 800; line-height: 17px; }
.account { display: flex; align-items: center; height: 50px; gap: 13px; padding-left: 33px; border-left: 1px solid #3a4042; font-family: "Liberation Sans", sans-serif; font-size: 13px; font-weight: 700; }
.account svg { margin-right: 4px; }
.content { max-width: 1327px; margin: 32px auto 0; }
.showcase { display: flex; gap: 50px; margin: 0 -8px 0 2px; }

.summary { flex: none; width: 248px; padding-top: 18px; text-align: center; }
.summary h2 { font-size: 21px; line-height: 30px; text-align: left; white-space: nowrap; }
.preview { display: flex; flex-direction: column; align-items: center; height: 199px; margin: 20px 0 10px; padding-top: 66px; border-radius: 10px; background: #3a4345; color: #1b2c32; }
.preview strong { font-size: 18px; font-weight: 600; line-height: 26px; }
.preview small { font-size: 9px; line-height: 8px; color: #2a383c; }
.edit { width: 100%; height: 40px; border-radius: 4px; background: #3b4042; font-size: 12px; font-weight: 700; }
.summary p { margin-top: 12px; font-size: 13px; line-height: 20px; }
.share { display: flex; align-items: center; justify-content: center; gap: 10px; margin-top: 12px; font-size: 13px; }
.share b { margin: 0 4px 0 -2px; }
.share a { display: flex; }

.plans { flex: 1; display: flex; gap: 10px; }
.plan { flex: 1; min-width: 0; border: 1px solid #3b4042; border-radius: 10px; text-align: center; padding-bottom: 24px; }
.plan h3 { height: 44px; border-radius: 9px 9px 0 0; background: #3b4042; font-size: 15px; font-weight: 700; line-height: 44px; }
.pitch { height: 38px; margin: 16px 12px 32px; font-size: 15px; font-weight: 600; line-height: 19px; }
.prices { display: flex; flex-direction: column; justify-content: center; height: 101px; }
.prices s { color: #30373a; font-size: 36px; font-weight: 700; line-height: 40px; }
.prices s sup { font-size: 16px; text-decoration: none; display: inline-block; }
.prices strong { font-size: 50px; font-weight: 800; line-height: 56px; }
.prices strong sup { font-size: 24px; }
.prices sup { line-height: 0; }
.prices s + strong { margin-top: 5px; }
.buy { width: calc(100% - 32px); height: 40px; margin: 14px 16px 12px; border: 2px solid #18443a; border-radius: 4px; font-size: 13px; font-weight: 600; }
.plan li { padding: 8px 12px; font-size: 13px; line-height: 16px; }
.plan li svg { margin-left: 2px; vertical-align: -1px; }
.plan-premium { border: 2px solid #184439; }
.plan-premium h3 { background: #184439; }
.plan-premium .buy { background: #184439; }

.website { height: 200px; margin-top: 56px; padding-top: 36px; border-radius: 10px; background: #3b4042; text-align: center; }
.website h2 { font-size: 27px; font-weight: 800; line-height: 36px; }

/* Email form */
.overlay { position: absolute; inset: 0; display: flex; align-items: center; justify-content: center; }
.modal { position: relative; display: flex; flex-direction: column; width: 550px; padding: 66px 90px 102px; background: #fff; color: #13202c; box-shadow: 0 8px 32px rgba(0, 0, 0, .4); }
.modal-close { position: absolute; top: 32px; right: 32px; }
.modal h1 { margin: 0 -4px 21px; font-size: 35px; line-height: 45px; text-align: center; }
.field { position: relative; display: flex; flex-direction: column; }
.field + .field { margin-top: 22px; }
.field label { position: relative; font-size: 12px; line-height: 18px; }
.field input { height: 40px; margin-top: -8px; padding: 0 2px; border: 0; border-bottom: 1px solid #13202c; border-radius: 0; outline: 0; background: transparent; color: #2c3038; font: 16px "Open Sans", sans-serif; }
.field-focus input { background: #e8effc; border-color: #00dca8; }
.field-focus label { z-index: 1; }
.caret { position: absolute; left: 228px; top: 20px; width: 1px; height: 20px; background: #000; }
.download { align-self: center; height: 40px; margin: 64px 0 42px; padding: 0 33px; border-radius: 4px; background: #00e5ad; font-size: 12px; font-weight: 700; }
.create { align-self: center; color: #00e5ad; font-size: 12px; font-weight: 600; line-height: 20px; }
.help { position: absolute; right: 20px; bottom: 14px; gap: 10px; width: 108px; height: 46px; border-radius: 23px; background: #3de5af; color: #17694f; font-size: 15px; font-weight: 700; }

/* Sidebar */
.sidebar { flex: none; display: flex; flex-direction: column; width: 46px; padding: 2px 0; color: #fff; }
.sidebar button { width: 100%; height: 42px; flex: none; }
.sidebar-foot { margin-top: auto; display: flex; flex-direction: column; align-items: center; }
.sidebar-foot::before { content: ""; width: 28px; height: 1px; margin-bottom: 2px; background: #6b6b6b; }

/* Taskbar */
.taskbar { flex: none; display: flex; height: 40px; background: #d9d9d9; color: #000; font-size: 12px; }
.taskbar button { height: 40px; }
.system { display: flex; }
.system button { width: 48px; }
.apps { display: flex; gap: 1px; padding-left: 3px; }
.apps button { width: 48px; }
.open { background: linear-gradient(#48545a, #48545a) center bottom / 40px 2px no-repeat; }
.apps .active { background: linear-gradient(#48545a, #48545a) center bottom / 48px 2px no-repeat #f0f0f0; }
.tray { display: flex; align-items: center; gap: 9px; margin-left: auto; }
.clock { display: flex; flex-direction: column; align-items: center; width: 60px; line-height: 18px; font-family: "Open Sans", "DejaVu Sans", sans-serif; }
.notice { position: relative; width: 51px; margin: 0 4px 0 -9px; padding-left: 14px; border-right: 1px solid #a0a0a0; }
.taskbar .notice { justify-content: flex-start; }
.notice span { position: absolute; left: 21px; top: 20px; width: 17px; height: 17px; border: 1px solid #888; border-radius: 50%; background: #d9d9d9; font: 12px/16px "DejaVu Sans", sans-serif; }
```
